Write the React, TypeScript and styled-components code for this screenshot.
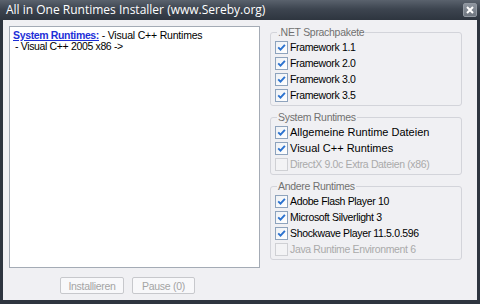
import React from 'react';
import styled, {createGlobalStyle} from 'styled-components';

const GlobalStyle = createGlobalStyle`
  html, body {
    margin: 0;
    padding: 0;
  }
  body {
    width: 480px;
    height: 304px;
    overflow: hidden;
    background: #2e353f;
  }
`

// alt = label drawn in the wider "Segoe"-like face the original uses for a few rows
type Item = { label: string; checked: boolean; disabled?: boolean; alt?: boolean };

const groups: { title: string; items: Item[] }[] = [
    {
        title: '.NET Sprachpakete',
        items: [
            {label: 'Framework 1.1', checked: true},
            {label: 'Framework 2.0', checked: true},
            {label: 'Framework 3.0', checked: true},
            {label: 'Framework 3.5', checked: true},
        ],
    },
    {
        title: 'System Runtimes',
        items: [
            {label: 'Allgemeine Runtime Dateien', checked: true, alt: true},
            {label: 'Visual C++ Runtimes', checked: true, alt: true},
            {label: 'DirectX 9.0c Extra Dateien (x86)', checked: false, disabled: true},
        ],
    },
    {
        title: 'Andere Runtimes',
        items: [
            {label: 'Adobe Flash Player 10', checked: true},
            {label: 'Microsoft Silverlight 3', checked: true},
            {label: 'Shockwave Player 11.5.0.596', checked: true},
            {label: 'Java Runtime Environment 6', checked: false, disabled: true},
        ],
    },
];

const CheckBox = ({checked, disabled}: { checked: boolean; disabled?: boolean }) => (
    <Box $disabled={disabled}>
        {checked && (
            <svg width="9" height="9" viewBox="0 0 9 9">
                <path d="M1.2 4.4 L3.5 6.7 L7.9 1.8" fill="none" stroke="#2b72cf" strokeWidth="1.9"/>
            </svg>
        )}
    </Box>
);

export default function App() {
    return (
        <>
            <GlobalStyle/>
            <Window>
                <TitleBar>
                    <Title>All in One Runtimes Installer (www.Sereby.org)</Title>
                    <CloseButton>
                        <svg width="8" height="8" viewBox="0 0 8 8">
                            <path d="M1 1 L7 7 M7 1 L1 7" stroke="#fff" strokeWidth="2"/>
                        </svg>
                    </CloseButton>
                </TitleBar>
                <Body>
                    <LeftColumn>
                        <ListBox>
                            <Line><Link>System Runtimes:</Link><Alt> - Visual C++ Runtimes</Alt></Line>
                            <Line $indent>- Visual C++ 2005 x86 -&gt;</Line>
                        </ListBox>
                        <ButtonRow>
                            <Button disabled $width={64}>Installieren</Button>
                            <Button disabled $width={63}>Pause (0)</Button>
                        </ButtonRow>
                    </LeftColumn>
                    <RightColumn>
                        {groups.map((g) => (
                            <Group key={g.title}>
                                <Legend>{g.title}</Legend>
                                {g.items.map((it) => (
                                    <Row key={it.label} $disabled={it.disabled}>
                                        <CheckBox checked={it.checked} disabled={it.disabled}/>
                                        <Label $alt={it.alt}>{it.label}</Label>
                                    </Row>
                                ))}
                            </Group>
                        ))}
                    </RightColumn>
                </Body>
            </Window>
        </>
    );
}

const Window = styled.div`
  width: 480px;
  height: 304px;
  box-sizing: border-box;
  display: flex;
  flex-direction: column;
  background: #2e353f;
  padding: 0 3px 4px 3px;
  font-family: "Liberation Sans", Arial, sans-serif;
`

const TitleBar = styled.div`
  height: 20px;
  margin: 0 -3px;
  padding: 0 3px 0 6px;
  display: flex;
  align-items: center;
  justify-content: space-between;
  background: linear-gradient(#5a626d, #3d4550 45%, #2e353f);
`

const Title = styled.span`
  color: #ffffff;
  font-family: "Open Sans", "Liberation Sans", sans-serif;
  font-size: 12px;
  line-height: 20px;
  white-space: nowrap;
`

const CloseButton = styled.div`
  width: 14px;
  height: 14px;
  box-sizing: border-box;
  border-radius: 2px;
  border: 1px solid #9299a2;
  background: linear-gradient(#8d949e, #6f7680);
  display: flex;
  align-items: center;
  justify-content: center;
`

const Body = styled.div`
  flex: 1;
  display: flex;
  background: #f0f0f3;
  padding: 6px 0 0 6px;
`

const LeftColumn = styled.div`
  width: 251px;
  display: flex;
  flex-direction: column;
`

const ListBox = styled.div`
  height: 242px;
  box-sizing: border-box;
  background: #ffffff;
  border: 1px solid #a4abb5;
  padding: 3px 3px;
  font-size: 10.5px;
  letter-spacing: -0.35px;
  line-height: 11px;
  color: #000;
`

const Line = styled.div<{ $indent?: boolean }>`
  white-space: pre;
  padding-left: ${p => (p.$indent ? '2px' : '0')};
`

const Link = styled.span`
  color: #1d2fd8;
  font-weight: bold;
  text-decoration: underline;
`

const Alt = styled.span`
  font-size: 10.5px;
  letter-spacing: -0.2px;
`

const ButtonRow = styled.div`
  display: flex;
  gap: 8px;
  margin-top: 9px;
  padding-left: 51px;
`

const Button = styled.button<{ $width: number }>`
  width: ${p => p.$width}px;
  height: 17px;
  padding: 0;
  box-sizing: border-box;
  border: 1px solid #c7c8cc;
  border-radius: 2px;
  background: #f8f8fa;
  color: #a4a4a4;
  font-family: "Liberation Sans", Arial, sans-serif;
  font-size: 10.5px;
  letter-spacing: -0.3px;
`

const RightColumn = styled.div`
  width: 192px;
  margin-left: 10px;
  display: flex;
  flex-direction: column;
  gap: 5px;
`

const Group = styled.fieldset`
  margin: 0;
  padding: 0 0 2px 4px;
  border: 1px solid #d3d4da;
  border-radius: 3px;
  min-width: 0;
`

const Legend = styled.legend`
  margin-left: 2px;
  padding: 0 1px;
  font-size: 10.5px;
  letter-spacing: -0.3px;
  line-height: 13px;
  color: #707070;
`

const Row = styled.div<{ $disabled?: boolean }>`
  height: 16px;
  display: flex;
  align-items: center;
  gap: 2px;
  color: ${p => (p.$disabled ? '#aaaaaa' : '#000000')};
  white-space: nowrap;
`

const Label = styled.span<{ $alt?: boolean }>`
  font-size: ${p => (p.$alt ? '11px' : '10.5px')};
  letter-spacing: ${p => (p.$alt ? '0' : '-0.35px')};
`

const Box = styled.span<{ $disabled?: boolean }>`
  width: 13px;
  height: 13px;
  box-sizing: border-box;
  border: 1px solid ${p => (p.$disabled ? '#cfd0d4' : '#8ea3bd')};
  background: ${p => (p.$disabled ? '#f3f3f5' : 'linear-gradient(135deg, #eef1f5, #ffffff)')};
  display: flex;
  align-items: center;
  justify-content: center;
  flex-shrink: 0;
`
